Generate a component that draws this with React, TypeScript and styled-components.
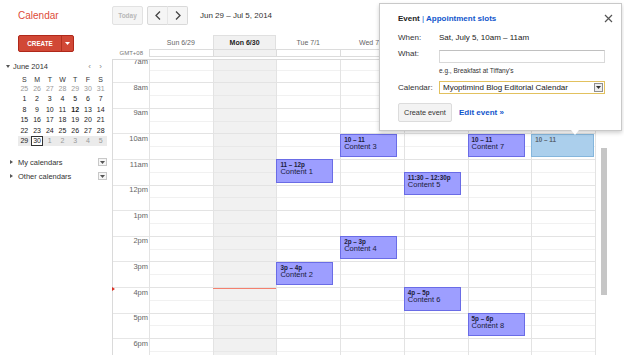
import styled, { createGlobalStyle } from "styled-components";

const HOUR = 25.6;
const FIRST_HOUR = 7;
const HOURS = Array.from({ length: 13 }, (_, i) => FIRST_HOUR + i);
const COL = 446 / 7;

type CalEvent = {
  day: number;
  start: number;
  end: number;
  time: string;
  title: string;
};

const EVENTS: CalEvent[] = [
  { day: 2, start: 11, end: 12, time: "11 – 12p", title: "Content 1" },
  { day: 2, start: 15, end: 16, time: "3p – 4p", title: "Content 2" },
  { day: 3, start: 10, end: 11, time: "10 – 11", title: "Content 3" },
  { day: 3, start: 14, end: 15, time: "2p – 3p", title: "Content 4" },
  { day: 4, start: 11.5, end: 12.5, time: "11:30 – 12:30p", title: "Content 5" },
  { day: 4, start: 16, end: 17, time: "4p – 5p", title: "Content 6" },
  { day: 5, start: 10, end: 11, time: "10 – 11", title: "Content 7" },
  { day: 5, start: 17, end: 18, time: "5p – 6p", title: "Content 8" },
];

const DAYS = ["Sun 6/29", "Mon 6/30", "Tue 7/1", "Wed 7/2", "Thu 7/3", "Fri 7/4", "Sat 7/5"];
const TODAY = 1;

const MINI_NAMES = ["S", "M", "T", "W", "T", "F", "S"];
const MINI_WEEKS: { d: number; out?: boolean; bold?: boolean; sel?: boolean }[][] = [
  [25, 26, 27, 28, 29, 30, 31].map((d) => ({ d, out: true })),
  [1, 2, 3, 4, 5, 6, 7].map((d) => ({ d })),
  [8, 9, 10, 11, 12, 13, 14].map((d) => ({ d, bold: d === 12 })),
  [15, 16, 17, 18, 19, 20, 21].map((d) => ({ d })),
  [22, 23, 24, 25, 26, 27, 28].map((d) => ({ d })),
  [
    { d: 29 },
    { d: 30, sel: true },
    { d: 1, out: true },
    { d: 2, out: true },
    { d: 3, out: true },
    { d: 4, out: true },
    { d: 5, out: true },
  ],
];

const GlobalStyle = createGlobalStyle`
  html, body { margin: 0; padding: 0; background: #fff; }
  body { font-family: "Liberation Sans", Arial, sans-serif; overflow: hidden; }
`;

const Chevron = ({ dir }: { dir: "left" | "right" }) => (
  <svg width="6" height="9" viewBox="0 0 6 9">
    <polyline
      points={dir === "left" ? "5,0.5 1,4.5 5,8.5" : "1,0.5 5,4.5 1,8.5"}
      fill="none"
      stroke="#444"
      strokeWidth="1.3"
    />
  </svg>
);

const DownTriangle = ({ color }: { color: string }) => (
  <svg width="5" height="3" viewBox="0 0 5 3">
    <polygon points="0,0 5,0 2.5,3" fill={color} />
  </svg>
);

export default function App() {
  return (
    <Page>
      <GlobalStyle />
      <TopBar>
        <Logo>Calendar</Logo>
        <TodayButton>Today</TodayButton>
        <NavGroup>
          <NavButton>
            <Chevron dir="left" />
          </NavButton>
          <NavButton $last>
            <Chevron dir="right" />
          </NavButton>
        </NavGroup>
        <DateRange>Jun 29 – Jul 5, 2014</DateRange>
      </TopBar>

      <Body>
        <Sidebar>
          <CreateButton>
            <CreateLabel>CREATE</CreateLabel>
            <CreateArrow>
              <DownTriangle color="#fff" />
            </CreateArrow>
          </CreateButton>

          <MiniHeader>
            <Caret $open />
            <MonthTitle>June 2014</MonthTitle>
            <MiniNav>‹</MiniNav>
            <MiniNav>›</MiniNav>
          </MiniHeader>
          <MiniGrid>
            {MINI_NAMES.map((n, i) => (
              <MiniName key={i}>{n}</MiniName>
            ))}
          </MiniGrid>
          {MINI_WEEKS.map((week, wi) => (
            <MiniWeek key={wi} $current={wi === MINI_WEEKS.length - 1}>
              {week.map((c, ci) => (
                <MiniDay key={ci} $out={c.out} $bold={c.bold} $sel={c.sel}>
                  {c.d}
                </MiniDay>
              ))}
            </MiniWeek>
          ))}

          <CalSection $first>
            <Caret />
            <SectionName>My calendars</SectionName>
            <SectionMenu>
              <DownTriangle color="#555" />
            </SectionMenu>
          </CalSection>
          <CalSection>
            <Caret />
            <SectionName>Other calendars</SectionName>
            <SectionMenu>
              <DownTriangle color="#555" />
            </SectionMenu>
          </CalSection>
        </Sidebar>

        <Main>
          <HeadRow>
            <span />
            {DAYS.map((d, i) => (
              <DayName key={d} $today={i === TODAY}>
                {d}
              </DayName>
            ))}
          </HeadRow>
          <HeadRow>
            <Timezone>GMT+08</Timezone>
            {DAYS.map((d, i) => (
              <AllDayCell key={d} $today={i === TODAY} $last={i === 6} />
            ))}
          </HeadRow>

          <GridRow>
            <Viewport>
              <TimeGrid>
                <Gutter>
                  {HOURS.map((h) => (
                    <HourLabel key={h}>
                      {h === 12 ? "12pm" : h > 12 ? `${h - 12}pm` : `${h}am`}
                    </HourLabel>
                  ))}
                  <NowMarker />
                </Gutter>
                {DAYS.map((d, di) => (
                  <DayColumn key={d} $today={di === TODAY}>
                    {HOURS.map((h) => (
                      <HourSlot key={h} $today={di === TODAY} />
                    ))}
                    {di === TODAY && <NowLine />}
                    {EVENTS.filter((e) => e.day === di).map((e) => (
                      <EventBlock
                        key={e.title}
                        style={{
                          top: (e.start - FIRST_HOUR) * HOUR,
                          height: (e.end - e.start) * HOUR - 2,
                        }}
                      >
                        <EventTime>{e.time}</EventTime>
                        <EventTitle>{e.title}</EventTitle>
                      </EventBlock>
                    ))}
                    {di === 6 && (
                      <DraftBlock style={{ top: (10 - FIRST_HOUR) * HOUR, height: HOUR - 2 }}>
                        <EventTime $muted>10 – 11</EventTime>
                      </DraftBlock>
                    )}
                  </DayColumn>
                ))}
              </TimeGrid>
            </Viewport>
            <ScrollTrack>
              <ScrollThumb />
            </ScrollTrack>
          </GridRow>
        </Main>
      </Body>

      <Popup>
        <PopupTitle>
          Event <Sep>|</Sep> <TabLink>Appointment slots</TabLink>
        </PopupTitle>
        <CloseButton>
          <svg width="9" height="9" viewBox="0 0 9 9">
            <path d="M1 1 L8 8 M8 1 L1 8" stroke="#555" strokeWidth="1.2" />
          </svg>
        </CloseButton>
        <Field $gap={11}>
          <FieldLabel>When:</FieldLabel>
          <FieldValue>Sat, July 5, 10am – 11am</FieldValue>
        </Field>
        <Field $gap={8}>
          <FieldLabel>What:</FieldLabel>
          <TextBox />
        </Field>
        <Hint>e.g., Breakfast at Tiffany's</Hint>
        <Field $gap={6} $center>
          <FieldLabel>Calendar:</FieldLabel>
          <SelectBox>
            <SelectText>Myoptimind Blog Editorial Calendar</SelectText>
            <SelectArrow>
              <DownTriangle color="#333" />
            </SelectArrow>
          </SelectBox>
        </Field>
        <Actions>
          <GreyButton>Create event</GreyButton>
          <EditLink>Edit event »</EditLink>
        </Actions>
        <PopupArrow />
      </Popup>
    </Page>
  );
}

const Page = styled.div`
  position: relative;
  width: 624px;
  height: 356px;
  overflow: hidden;
  font-family: "Liberation Sans", Arial, sans-serif;
  color: #222;
`;

const TopBar = styled.header`
  display: flex;
  align-items: center;
  height: 30px;
`;

const Logo = styled.div`
  width: 112px;
  box-sizing: border-box;
  padding-left: 18px;
  font-size: 10px;
  color: #dd4b39;
`;

const TodayButton = styled.div`
  width: 31px;
  height: 19px;
  box-sizing: border-box;
  display: flex;
  align-items: center;
  justify-content: center;
  border: 1px solid #e2e2e2;
  border-radius: 2px;
  background: #f5f5f5;
  font-size: 6.5px;
  font-weight: bold;
  color: #b8b8b8;
`;

const NavGroup = styled.div`
  display: flex;
  margin-left: 4px;
`;

const NavButton = styled.div<{ $last?: boolean }>`
  width: 21px;
  height: 19px;
  box-sizing: border-box;
  display: flex;
  align-items: center;
  justify-content: center;
  background: #f5f5f5;
  border: 1px solid #d9d9d9;
  border-left: ${({ $last }) => ($last ? "1px solid #e6e6e6" : "1px solid #d9d9d9")};
  border-radius: ${({ $last }) => ($last ? "0 2px 2px 0" : "2px 0 0 2px")};
  margin-left: ${({ $last }) => ($last ? "-1px" : "0")};
`;

const DateRange = styled.div`
  margin-left: 12px;
  font-size: 8px;
  color: #333;
`;

const Body = styled.div`
  display: flex;
`;

const Sidebar = styled.aside`
  width: 112px;
  flex: none;
  font-size: 7px;
  color: #333;
`;

const CreateButton = styled.div`
  display: flex;
  width: 56px;
  height: 17px;
  margin: 5px 0 0 18px;
  border: 1px solid #b0281a;
  box-sizing: border-box;
  border-radius: 2px;
  background: #d14836;
  color: #fff;
`;

const CreateLabel = styled.div`
  flex: 1;
  display: flex;
  align-items: center;
  justify-content: center;
  font-size: 6.3px;
  font-weight: bold;
`;

const CreateArrow = styled.div`
  width: 11px;
  display: flex;
  align-items: center;
  justify-content: center;
  border-left: 1px solid #b3321f;
`;

const MiniHeader = styled.div`
  display: flex;
  align-items: center;
  height: 12px;
  margin-top: 8px;
  padding-left: 6px;
  width: 106px;
  box-sizing: border-box;
`;

const Caret = styled.span<{ $open?: boolean }>`
  width: 0;
  height: 0;
  margin-right: 3px;
  border-style: solid;
  ${({ $open }) =>
    $open
      ? "border-width: 3px 2.5px 0 2.5px; border-color: #555 transparent transparent transparent;"
      : "border-width: 2.5px 0 2.5px 3px; border-color: transparent transparent transparent #555;"}
`;

const MonthTitle = styled.span`
  flex: 1;
  font-size: 7.5px;
  color: #333;
`;

const MiniNav = styled.span`
  width: 11px;
  text-align: center;
  font-size: 8px;
  color: #888;
`;

const MiniGrid = styled.div`
  display: grid;
  grid-template-columns: repeat(7, 1fr);
  width: 89px;
  margin: 4px 0 0 18px;
  height: 7px;
`;

const MiniName = styled.span`
  text-align: center;
  line-height: 7px;
  font-size: 7px;
  color: #333;
`;

const MiniWeek = styled.div<{ $current?: boolean }>`
  display: grid;
  grid-template-columns: repeat(7, 1fr);
  width: 89px;
  height: 10.5px;
  margin-left: 18px;
  background: ${({ $current }) => ($current ? "#ebebeb" : "transparent")};
`;

const MiniDay = styled.span<{ $out?: boolean; $bold?: boolean; $sel?: boolean }>`
  display: flex;
  align-items: center;
  justify-content: center;
  box-sizing: border-box;
  font-size: 7px;
  color: ${({ $out }) => ($out ? "#999" : "#222")};
  font-weight: ${({ $bold }) => ($bold ? "bold" : "normal")};
  border: 1px solid ${({ $sel }) => ($sel ? "#333" : "transparent")};
  background: ${({ $sel }) => ($sel ? "#fff" : "transparent")};
`;

const CalSection = styled.div<{ $first?: boolean }>`
  display: flex;
  align-items: center;
  height: 14px;
  margin-top: ${({ $first }) => ($first ? "9px" : "0")};
  padding-left: 10px;
  width: 107px;
  box-sizing: border-box;
`;

const SectionName = styled.span`
  flex: 1;
  font-size: 7.5px;
  color: #333;
  margin-left: 2px;
`;

const SectionMenu = styled.span`
  width: 7px;
  height: 6px;
  display: flex;
  align-items: center;
  justify-content: center;
  border: 1px solid #c8c8c8;
  background: #f6f6f6;
`;

const Main = styled.main`
  width: 512px;
  display: flex;
  flex-direction: column;
`;

const HeadRow = styled.div`
  display: grid;
  grid-template-columns: 37px repeat(7, ${COL}px) 1fr;
  &:first-child {
    padding-top: 5px;
  }
`;

const DayName = styled.div<{ $today?: boolean }>`
  height: 14px;
  box-sizing: border-box;
  display: flex;
  align-items: center;
  justify-content: center;
  font-size: 7px;
  color: ${({ $today }) => ($today ? "#222" : "#666")};
  font-weight: ${({ $today }) => ($today ? "bold" : "normal")};
  background: ${({ $today }) => ($today ? "#f1f1f1" : "transparent")};
  border: 1px solid ${({ $today }) => ($today ? "#e0e0e0" : "transparent")};
  border-bottom: none;
`;

const Timezone = styled.div`
  font-size: 6px;
  line-height: 8px;
  color: #777;
  text-align: right;
  padding-right: 6px;
`;

const AllDayCell = styled.div<{ $today?: boolean; $last?: boolean }>`
  height: 8px;
  box-sizing: border-box;
  border: 1px solid #dcdcdc;
  border-right: ${({ $last }) => ($last ? "1px solid #dcdcdc" : "none")};
  background: ${({ $today }) => ($today ? "#f1f1f1" : "#fff")};
`;

const GridRow = styled.div`
  display: flex;
  margin-top: 2px;
`;

const Viewport = styled.div`
  width: 484px;
  height: 296px;
  box-sizing: border-box;
  overflow: hidden;
  border-top: 1px solid #dadada;
  border-right: 1px solid #e3e3e3;
`;

const TimeGrid = styled.div`
  display: grid;
  grid-template-columns: 37px repeat(7, 1fr);
  margin-top: -3.3px;
`;

const Gutter = styled.div`
  position: relative;
  border-left: 1px solid #dadada;
`;

const HourLabel = styled.div`
  height: ${HOUR}px;
  box-sizing: border-box;
  border-top: 1px solid #e6e6e6;
  padding: 0.5px 1px 0 0;
  text-align: right;
  font-size: 7.5px;
  line-height: 8px;
  color: #666;
`;

const NowMarker = styled.span`
  position: absolute;
  left: -1px;
  top: ${(16 - FIRST_HOUR) * HOUR}px;
  width: 0;
  height: 0;
  border-style: solid;
  border-width: 2px 0 2px 3px;
  border-color: transparent transparent transparent #d93025;
`;

const DayColumn = styled.div<{ $today?: boolean }>`
  position: relative;
  border-left: 1px solid #e3e3e3;
  background: ${({ $today }) => ($today ? "#f1f1f1" : "#fff")};
`;

const HourSlot = styled.div<{ $today?: boolean }>`
  position: relative;
  height: ${HOUR}px;
  box-sizing: border-box;
  border-top: 1px solid #e3e3e3;
  &::after {
    content: "";
    position: absolute;
    left: 0;
    right: 0;
    top: ${HOUR / 2 - 1}px;
    border-top: 1px solid ${({ $today }) => ($today ? "#e8e8e8" : "#f1f1f1")};
  }
`;

const NowLine = styled.div`
  position: absolute;
  left: -1px;
  right: 0;
  top: ${(16 - FIRST_HOUR) * HOUR + 0.6}px;
  height: 1.6px;
  background: #f4806e;
`;

const EventBlock = styled.div`
  position: absolute;
  left: -1px;
  width: 57px;
  box-sizing: border-box;
  padding: 1px 3px 0;
  background: #9d9eff;
  border: 1px solid #6a6ce6;
  color: #1b1b3a;
  overflow: hidden;
  z-index: 1;
`;

const DraftBlock = styled(EventBlock)`
  width: 63px;
  background: #abcfec;
  border-color: #85b6dc;
`;

const EventTime = styled.div<{ $muted?: boolean }>`
  font-size: 6.3px;
  font-weight: bold;
  line-height: 7px;
  color: ${({ $muted }) => ($muted ? "#5a6470" : "#1b1b3a")};
  white-space: nowrap;
`;

const EventTitle = styled.div`
  font-size: 7.5px;
  line-height: 8px;
  white-space: nowrap;
`;

const ScrollTrack = styled.div`
  width: 28px;
  padding: 89px 0 0 5px;
  box-sizing: border-box;
`;

const ScrollThumb = styled.div`
  width: 6px;
  height: 147px;
  background: #c6c6c6;
`;

const Popup = styled.div`
  position: absolute;
  left: 379px;
  top: 3px;
  width: 243px;
  height: 128px;
  box-sizing: border-box;
  padding: 11px 0 0 18px;
  background: #fff;
  border: 1px solid #c9c9c9;
  box-shadow: 0 2px 4px rgba(0, 0, 0, 0.18);
  font-size: 8px;
  color: #222;
  z-index: 5;
`;

const PopupTitle = styled.div`
  font-weight: bold;
  line-height: 8px;
`;

const Sep = styled.span`
  color: #1155cc;
  font-weight: normal;
`;

const TabLink = styled.span`
  color: #1155cc;
`;

const CloseButton = styled.div`
  position: absolute;
  top: 10px;
  right: 8px;
  width: 9px;
  height: 9px;
  display: flex;
`;

const Field = styled.div<{ $gap: number; $center?: boolean }>`
  display: flex;
  align-items: ${({ $center }) => ($center ? "center" : "flex-start")};
  margin-top: ${({ $gap }) => $gap}px;
`;

const FieldLabel = styled.div`
  width: 41px;
  line-height: 8px;
  color: #333;
`;

const FieldValue = styled.div`
  line-height: 8px;
`;

const TextBox = styled.div`
  width: 166px;
  height: 13px;
  box-sizing: border-box;
  border: 1px solid #d9d9d9;
  border-top-color: #c0c0c0;
  background: #fff;
`;

const Hint = styled.div`
  margin: 4px 0 0 41px;
  font-size: 6.5px;
  line-height: 8px;
  color: #333;
`;

const SelectBox = styled.div`
  width: 166px;
  height: 13px;
  box-sizing: border-box;
  display: flex;
  align-items: center;
  border: 1px solid #e2c15e;
  background: #fff;
`;

const SelectText = styled.div`
  flex: 1;
  padding-left: 3px;
  font-size: 8px;
  white-space: nowrap;
`;

const SelectArrow = styled.div`
  width: 9px;
  height: 9px;
  margin-right: 1px;
  box-sizing: border-box;
  display: flex;
  align-items: center;
  justify-content: center;
  border: 1px solid #8f8f8f;
  background: #eeeeee;
`;

const Actions = styled.div`
  display: flex;
  align-items: center;
  margin-top: 9px;
`;

const GreyButton = styled.div`
  width: 54px;
  height: 19px;
  box-sizing: border-box;
  display: flex;
  align-items: center;
  justify-content: center;
  border: 1px solid #dcdcdc;
  border-radius: 2px;
  background: #f3f3f3;
  font-size: 7.3px;
  color: #333;
`;

const EditLink = styled.div`
  margin-left: 7px;
  font-size: 8px;
  font-weight: bold;
  color: #1155cc;
`;

const PopupArrow = styled.div`
  position: absolute;
  left: 191px;
  bottom: -5px;
  width: 0;
  height: 0;
  border-style: solid;
  border-width: 5px 4px 0 4px;
  border-color: #fff transparent transparent transparent;
`;
